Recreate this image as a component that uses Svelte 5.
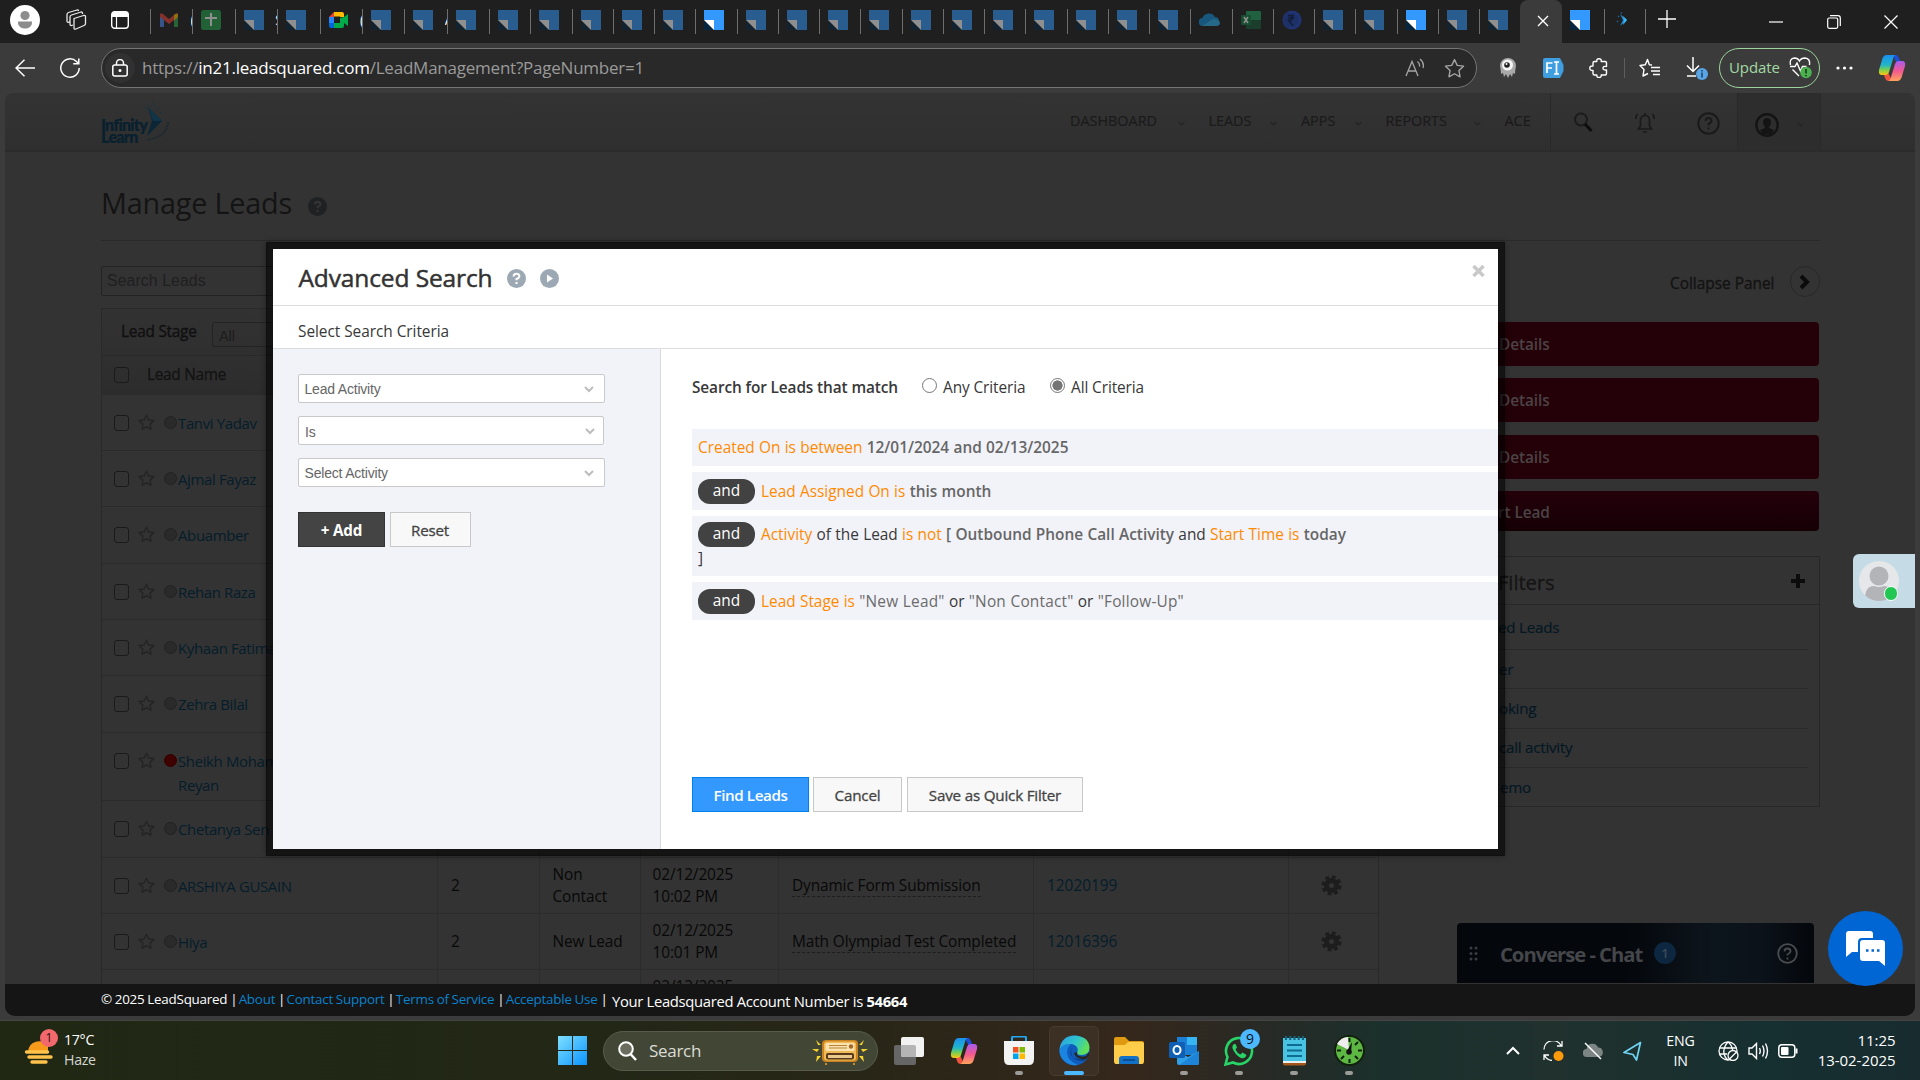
<script>
  const tabs = [
    { k: 'gmail', t: '(', w: 42.4 }, { k: 'sheets', w: 42.4 }, { k: 'ls', t: 'S', w: 42.4 }, { k: 'ls', w: 42.4 },
    { k: 'meet', t: '(', on: true, w: 42.4 }, { k: 'ls', w: 42.4 }, { k: 'ls', t: 'A', w: 42.4 }, { k: 'ls', w: 42.4 },
    ...Array.from({ length: 24 }, (_, i) => ({
      k: i === 17 ? 'cloud' : i === 18 ? 'excel' : i === 19 ? 'rupee' : 'ls',
      on: i === 5 || i === 22,
      w: 41.25
    })),
    { k: 'ls', w: 41 }
  ];

  const nav = [
    { t: 'DASHBOARD', w: 138.5, c: true }, { t: 'LEADS', w: 92.5, c: true },
    { t: 'APPS', w: 84.5, c: true }, { t: 'REPORTS', w: 119, c: true }, { t: 'ACE', w: 45 }
  ];

  const leads = [
    { n: 'Tanvi Yadav', h: 56 }, { n: 'Ajmal Fayaz', h: 56 }, { n: 'Abuamber', h: 57 }, { n: 'Rehan Raza', h: 56 },
    { n: 'Kyhaan Fatima', h: 56 }, { n: 'Zehra Bilal', h: 57 }, { n: 'Sheikh Moham', n2: 'Reyan', h: 68, hot: true },
    { n: 'Chetanya Sen', h: 56.5 },
    { n: 'ARSHIYA GUSAIN', h: 56, s: '2', st: 'Non Contact', d: '02/12/2025', m: '10:02 PM', a: 'Dynamic Form Submission', p: '12020199' },
    { n: 'Hiya', h: 56.5, s: '2', st: 'New Lead', d: '02/12/2025', m: '10:01 PM', a: 'Math Olympiad Test Completed', p: '12016396' },
    { n: '', h: 56, d: '02/12/2025', m: '\u00a0' }
  ];

  const filters = [
    { t: 'ed Leads', x: 97, h: 45 }, { t: 'er', x: 98, h: 39 }, { t: 'oking', x: 98, h: 39.5 },
    { t: 'call activity', x: 98, h: 39 }, { t: 'emo', x: 99, h: 40 }
  ];
</script>

{#snippet ls()}
  <svg width="20" height="20" viewBox="0 0 20 20"><path d="M0 0h20v20H10V10H0z" fill="#3399ff" /><path d="M0 10v10h10z" fill="#06263f" /><path d="M0 10h10v10z" fill="#fff" /></svg>
{/snippet}

{#snippet chev(size, color)}
  <svg width={size} height={size} viewBox="0 0 10 10" fill="none" stroke={color} stroke-width="2"><path d="M1 3l4 4 4-4" /></svg>
{/snippet}

{#snippet copilot(s)}
  <svg width={s} height={s} viewBox="0 0 28 28">
    <defs>
      <linearGradient id="cpa" x1="0" y1="0" x2="0" y2="1"><stop offset="0" stop-color="#1a8ff0" /><stop offset=".5" stop-color="#21b6c8" /><stop offset=".75" stop-color="#7fd04a" /><stop offset="1" stop-color="#ffc414" /></linearGradient>
      <linearGradient id="cpb" x1="0" y1="0" x2="0" y2="1"><stop offset="0" stop-color="#a85cf0" /><stop offset=".5" stop-color="#f2588f" /><stop offset="1" stop-color="#ffa45c" /></linearGradient>
    </defs>
    <path d="M18 1h-3l4 9h4L21 4q-1-3-3-3z" fill="#1c4fd6" />
    <path d="M10 27h4l-4-9H5l2 6q1 3 3 3z" fill="#ee5340" />
    <path d="M9 1h9q-2 0-3 4l-4 13q-1 3-4 3H4q-4 0-3-5L4 6q1-5 5-5z" fill="url(#cpa)" />
    <path d="M19 27h-9q2 0 3-4l4-13q1-3 4-3h3q4 0 3 5l-3 10q-1 5-5 5z" fill="url(#cpb)" />
  </svg>
{/snippet}

{#snippet star(s, color, sw)}
  <svg width={s} height={s} viewBox="0 0 20 20" fill="none" stroke={color} stroke-width={sw} stroke-linejoin="round"><path d="M10 1.500l2.600 5.500 6 .8-4.400 4.100 1.100 6L10 15l-5.300 2.900 1.100-6L1.400 7.800l6-.8z" /></svg>
{/snippet}

<div class="screen">
  <div class="tabstrip">
    <svg class="profile" width="30" height="30" viewBox="0 0 30 30"><circle cx="15" cy="15" r="15" fill="#fff" /><circle cx="15" cy="10.500" r="4.600" fill="#8c8c8c" /><path d="M8 16.500h14v1.500a7 5.500 0 0 1-14 0z" fill="#8c8c8c" /></svg>
    <svg class="work" width="22" height="22" viewBox="0 0 22 22" fill="none" stroke="#e8e8e8" stroke-width="1.300" stroke-linejoin="round"><path d="M9 9.500l9.500-3q2-.5 2 1v7q0 1.500-1.500 2l-8 3.500q-2 .7-2-1z" /><path d="M8 16l-1.500.5q-1.500.3-1.500-1.500V8q0-1.500 1.500-2L16 3q1.500-.4 1.500 1.500v.5" /><path d="M5 13l-1.500.3q-1.500.2-1.500-1.500V5.500Q2 4 3.500 3.500L12 1q1.500-.4 1.500 1" /></svg>
    <svg class="vtab" width="18" height="18" viewBox="0 0 18 18"><rect x=".7" y=".7" width="16.600" height="16.600" rx="3" fill="none" stroke="#fff" stroke-width="1.400" /><path d="M1 2.500Q1 1 3 1h12q2 0 2 2v3H1z" fill="#fff" /><path d="M5.500 6v11" stroke="#fff" stroke-width="1.200" /></svg>
    {#each tabs as tab}
      <div class="tab" style:width="{tab.w}px">
        <span class="fav" class:on={tab.on}>
          {#if tab.k === 'ls'}{@render ls()}
          {:else if tab.k === 'gmail'}<svg width="20" height="20" viewBox="0 0 20 20"><path d="M1 4v13h4V9z" fill="#4a8af4" /><path d="M19 4v13h-4V9z" fill="#34a853" /><path d="M1 5q0-3 3-1l6 5 6-5q3-2 3 1v2l-9 7-9-7z" fill="#ea4335" /><path d="M15 5q4-3 4 0v2l-4 3.500z" fill="#fbbc04" /></svg>
          {:else if tab.k === 'sheets'}<svg width="20" height="20" viewBox="0 0 20 20"><rect width="20" height="20" rx="2.500" fill="#23a34b" /><path d="M10 3v13M4 8h12" stroke="#fff" stroke-width="2" /></svg>
          {:else if tab.k === 'meet'}<svg width="20" height="20" viewBox="0 0 20 20"><path d="M5 2v5H0z" fill="#ea4335" /><path d="M5 2h8q2 0 2 2v3h-4V6.500H5z" fill="#ffba00" /><path d="M0 7h5v6.500H0z" fill="#2684fc" /><path d="M0 13h5v5H2q-2 0-2-2z" fill="#0066da" /><path d="M5 13h6V8l4-1 4-3v12l-4-3v3q0 2-2 2H5z" fill="#00ac47" /></svg>
          {:else if tab.k === 'cloud'}<svg width="21" height="20" viewBox="0 0 21 20"><path d="M4 16a4 4 0 0 1-.5-8A7 7 0 0 1 16 7a4.600 4.600 0 0 1 1 9z" fill="#1190dd" /><path d="M3 16l11-7q6 0 7 4 0 3-4 3z" fill="#2bb0ee" /></svg>
          {:else if tab.k === 'excel'}<svg width="20" height="20" viewBox="0 0 20 20"><rect x="5" y="1" width="15" height="18" rx="1" fill="#21a366" /><path d="M5 10h15v9H5z" fill="#185c37" /><rect y="5" width="10" height="10" rx="1" fill="#107c41" /><path d="M3 7l4 6M7 7l-4 6" stroke="#fff" stroke-width="1.500" /></svg>
          {:else}<svg width="20" height="20" viewBox="0 0 20 20"><circle cx="10" cy="10" r="9.500" fill="#2547c8" /><circle cx="9" cy="10" r="7.500" fill="#1d44b0" /><path d="M6 5.500h6M6 8h6M6.500 5.500q4.500 0 4 2.500-.5 2.500-4 2.500l4.500 5" stroke="#0a1a52" stroke-width="1.500" fill="none" /></svg>{/if}
        </span>
        {#if tab.t}<span class="sliver">{tab.t}</span>{/if}
      </div>
    {/each}
    <div class="activetab"><svg width="12" height="12" viewBox="0 0 12 12" stroke="#fff" stroke-width="1.400"><path d="M1 1l10 10M11 1L1 11" /></svg></div>
    <div class="tab last1"><span class="fav on">{@render ls()}</span></div>
    <div class="tab last2"><span class="fav on"><svg width="20" height="20" viewBox="0 0 20 20"><path d="M7 4l7 6-7 6 3-6z" fill="#2389c8" /><path d="M10 6l4 4-4 5 1-5z" fill="#35b5f5" /><path d="M5 6l1 1M8 2.500l1 1M4 11l1 1" stroke="#1c5f9a" stroke-width="1.500" /></svg></span></div>
    <div class="tab plus"><svg width="18" height="18" viewBox="0 0 18 18" stroke="#fff" stroke-width="1.300"><path d="M9 0v18M0 9h18" /></svg></div>
    <div class="winctl">
      <svg width="14" height="14" viewBox="0 0 14 14" stroke="#fff" stroke-width="1.200"><path d="M0 7h14" /></svg>
      <svg width="14" height="14" viewBox="0 0 14 14" fill="none" stroke="#fff" stroke-width="1.200"><rect x=".7" y="3" width="10" height="10.300" rx="1.500" /><path d="M3 .7h8q2.300 0 2.300 2.300v8" /></svg>
      <svg width="14" height="14" viewBox="0 0 14 14" stroke="#fff" stroke-width="1.200"><path d="M.5.5l13 13M13.500.5l-13 13" /></svg>
    </div>
  </div>

  <div class="toolbar">
    <svg class="back" width="21" height="18" viewBox="0 0 21 18" fill="none" stroke="#fff" stroke-width="1.500"><path d="M20 9H1M9.500.8L1 9l8.500 8.200" /></svg>
    <svg class="reload" width="20" height="20" viewBox="0 0 20 20" fill="none" stroke="#fff" stroke-width="1.500"><path d="M19.200 10A9.200 9.200 0 1 1 16.500 3.500L18.500 5.500M18.800.5v5.300h-5.600" /></svg>
    <div class="address">
      <div class="lockwrap"><svg width="16" height="18" viewBox="0 0 16 18" fill="none" stroke="#fff" stroke-width="1.500"><rect x=".8" y="6" width="14.400" height="11" rx="2" /><path d="M4.500 6V4a3.500 3.500 0 0 1 7 0v2" /><circle cx="8" cy="11.500" r=".8" fill="#fff" /></svg></div>
      <div class="url">https://<b>in21.leadsquared.com</b>/LeadManagement?PageNumber=1</div>
      <svg class="read" width="20" height="20" viewBox="0 0 20 20" fill="none" stroke="#a5a5a5" stroke-width="1.300"><path d="M1 18L7 3.500 13 18M3.300 13h7.500M12.500 3.500q2.500 2 2 5M15 1q4.500 3.500 3 9" /></svg>
      {@render star(21, '#a5a5a5', 1.3)}
    </div>
    <svg class="octo" width="18" height="20" viewBox="0 0 18 20"><path d="M1 8a8 8 0 0 1 16 0q-1 4-1 8l-2-1-1 4-2-3-2 4-2-4-2 3-1-4-2 1q0-4-1-8z" fill="#a9a9a9" /><circle cx="8.500" cy="7" r="5.500" fill="#f5f5f5" /><circle cx="8" cy="7" r="2.800" fill="#222" /><circle cx="7.500" cy="6" r="1" fill="#fff" /></svg>
    <svg class="fi" width="21" height="20" viewBox="0 0 21 20"><path d="M2 0h15l3.500 7v6L17 20H2q-2 0-2-2V2q0-2 2-2z" fill="#3f9ee0" /><path d="M4 15V5h5.500M4 10h5M11 4h5M11 16h5M13.500 4v12" stroke="#fff" stroke-width="1.700" fill="none" /></svg>
    <svg class="puzzle" width="20" height="20" viewBox="0 0 20 20" fill="none" stroke="#fff" stroke-width="1.400" stroke-linejoin="round"><path d="M5.500 3.500h2.300q-.5-2.800 2.200-2.800t2.200 2.800h4q1.300 0 1.300 1.300v3.700q-3.500-.5-3.500 1.700t3.500 1.800v3.500q0 1.500-1.300 1.500h-4q.3 2.500-2.200 2.500T7.800 17H5.500Q4 17 4 15.500v-3Q.8 12.700.8 10.200T4 8V5q0-1.500 1.500-1.500z" /></svg>
    <i class="tsep"></i>
    <svg class="favs" width="21" height="20" viewBox="0 0 21 20" fill="none" stroke="#fff" stroke-width="1.400" stroke-linejoin="round"><path d="M13 7l-2.700-.3L8.500 1.500 6.300 6.700 1 7.500l4 4L4 18l5-2.500M12 9.500h9M12 13h9M14 16.500h7" /></svg>
    <svg class="dl" width="22" height="24" viewBox="0 0 22 24" fill="none" stroke="#fff" stroke-width="1.500"><path d="M7 1v14M1 9.500l6 6 6-6M1 20h9" /><circle cx="16" cy="18" r="6" fill="#59a5e6" stroke="none" /><path d="M16 16.500v5M16 14v1.500" stroke="#1d3a55" stroke-width="1.400" /></svg>
    <div class="update"><span>Update</span>
      <svg width="24" height="22" viewBox="0 0 24 22" fill="none" stroke="#fff" stroke-width="1.400"><path d="M1.500 8Q0 1.500 5.500 1 9 1 10.500 4 12 1 16 1q5.500.5 4.500 7M1 9.500h5l2-3.500 3.500 8 2-4.500h4M3.500 12.500l6.500 6.500" /><circle cx="17" cy="15.500" r="5.800" fill="#4caf50" stroke="none" /><path d="M17 12v4.500M17 18v1.300" stroke="#153b15" stroke-width="1.600" /></svg></div>
    <svg class="dots" width="17" height="4" viewBox="0 0 17 4" fill="#fff"><circle cx="2" cy="2" r="1.600" /><circle cx="8.500" cy="2" r="1.600" /><circle cx="15" cy="2" r="1.600" /></svg>
    {@render copilot(28)}
  </div>

  <div class="page">
    <div class="phead">
      <div class="logo">
        <div class="lt">Infinity<br />Learn</div>
        <svg width="28" height="42" viewBox="0 0 28 42"><path d="M6 5l14 14L5 34l5-15z" fill="#0a2637" /><path d="M6 5l5 14h9z" fill="#103548" /><path d="M5 2h1M9 4h1M3 6h1M12 3h1M15 7h1M10 1h1M18 11h1" stroke="#143349" stroke-width="1.500" /><path d="M26 20q-1 15-21 18" fill="none" stroke="#1b2930" stroke-width="2" stroke-dasharray="2 1" /></svg>
      </div>
      <div class="nav">
        {#each nav as n}
          <div class="navi" style:width="{n.w}px"><span>{n.t}</span>{#if n.c}<em>{@render chev(7, '#252525')}</em>{/if}</div>
        {/each}
      </div>
      <div class="tools">
        <svg width="20" height="20" viewBox="0 0 20 20" fill="none"><circle cx="8" cy="7.500" r="6" stroke="#1c1c1c" stroke-width="2" /><path d="M12 12l6.500 7" stroke="#0d0d0d" stroke-width="3" /></svg>
        <svg width="20" height="22" viewBox="0 0 20 22" fill="none" stroke="#1a1a1a" stroke-width="1.700"><path d="M3.500 17h13l-2-3V8a4.500 4.500 0 0 0-9 0v6zM10 1v2M8 20h4M2.500 2Q.8 4 .8 7M17.500 2q1.700 2 1.700 5" /></svg>
        <svg width="23" height="23" viewBox="0 0 23 23" fill="none" stroke="#1a1a1a" stroke-width="2"><circle cx="11.500" cy="11.500" r="10.200" /><path d="M8.500 9q0-3 3-3t3 2.800q0 1.700-3 3.200v1.500M11.500 15.500v2" /></svg>
      </div>
      <div class="user">
        <svg width="24" height="24" viewBox="0 0 24 24"><circle cx="12" cy="12" r="10.700" fill="none" stroke="#141414" stroke-width="2.400" /><path d="M12 5a4 4 0 0 1 4 4q0 3-2 5 0 1.500 5 3l-3 4H8l-3-4q5-1.500 5-3-2-2-2-5a4 4 0 0 1 4-4z" fill="#141414" /></svg>
        {@render chev(7, '#262626')}
      </div>
    </div>

    <div class="content">
      <div class="title"><h1>Manage Leads</h1>
        <svg width="19" height="19" viewBox="0 0 19 19"><circle cx="9.500" cy="9.500" r="9.500" fill="#1f2122" /><path d="M6.800 7.500q0-2.800 2.800-2.800t2.800 2.500q0 1.500-2.800 2.800v1.300M9.600 13v2" fill="none" stroke="#363636" stroke-width="2" /></svg>
      </div>
      <div class="cols">
        <div class="left">
          <div class="search">Search Leads</div>
          <div class="table">
            <div class="stage"><span>Lead Stage</span><div>All</div></div>
            <div class="thead"><i class="cb"></i><span>Lead Name</span></div>
            {#each leads as l}
              <div class="row" style:height="{l.h}px">
                <div class="name">
                  {#if l.n}<i class="cb"></i><span class="st">{@render star(17, '#252525', 1.8)}</span><i class="dot" class:hot={l.hot}></i>
                    <span class="nm">{l.n}{#if l.n2}<br />{l.n2}{/if}</span>{/if}
                </div>
                <div class="c">{l.s ?? ''}</div>
                <div class="c">{l.st ?? ''}</div>
                <div class="c date">{#if l.d}{l.d}<br />{l.m}{/if}</div>
                <div class="c">{#if l.a}<u>{l.a}</u>{/if}</div>
                <div class="c link">{l.p ?? ''}</div>
                <div class="c gear">{#if l.p}<svg width="21" height="21" viewBox="0 0 21 21"><circle cx="10.500" cy="10.500" r="5" fill="none" stroke="#1d1d1d" stroke-width="5" /><circle cx="10.500" cy="10.500" r="8.600" fill="none" stroke="#1d1d1d" stroke-width="3" stroke-dasharray="3.900 2.854" /></svg>{/if}</div>
              </div>
            {/each}
          </div>
        </div>
        <div class="right">
          <div class="collapse"><span>Collapse Panel</span><div><svg width="12" height="16" viewBox="0 0 12 16" fill="none" stroke="#0b0b0b" stroke-width="4"><path d="M2 2l6 6-6 6" /></svg></div></div>
          <div class="red">Details</div>
          <div class="red">Details</div>
          <div class="red third">Details</div>
          <div class="red dark">rt Lead</div>
          <div class="filters">
            <div class="fh"><span>Filters</span><svg width="14" height="14" viewBox="0 0 14 14" stroke="#0c0c0c" stroke-width="4"><path d="M7 0v14M0 7h14" /></svg></div>
            {#each filters as f}
              <div class="fl" style:height="{f.h}px" style:padding-left="{f.x}px">{f.t}</div>
            {/each}
          </div>
        </div>
      </div>
    </div>

    <div class="footer">
      <span class="f1">© 2025 LeadSquared | <a>About</a> | <a>Contact Support</a> | <a>Terms of Service</a> | <a>Acceptable Use</a> |</span>
      <span class="f2">Your Leadsquared Account Number is <b>54664</b></span>
    </div>

    <div class="converse">
      <svg width="9" height="15" viewBox="0 0 9 15" fill="#3a3d41"><circle cx="2" cy="2" r="1.500" /><circle cx="7" cy="2" r="1.500" /><circle cx="2" cy="7.500" r="1.500" /><circle cx="7" cy="7.500" r="1.500" /><circle cx="2" cy="13" r="1.500" /><circle cx="7" cy="13" r="1.500" /></svg>
      <strong>Converse - Chat</strong><span class="cn">1</span>
      <svg class="ch" width="21" height="21" viewBox="0 0 21 21" fill="none" stroke="#4a4c4e" stroke-width="1.800"><circle cx="10.500" cy="10.500" r="9.300" /><path d="M7.500 8.500q0-3 3-3t3 2.700q0 1.600-3 3.300v1M10.500 14.500v2" /></svg>
    </div>
    <div class="presence">
      <svg width="40" height="40" viewBox="0 0 40 40"><defs><clipPath id="pc"><circle cx="20" cy="20" r="20" /></clipPath></defs><circle cx="20" cy="20" r="20" fill="#e6e7e9" /><g clip-path="url(#pc)"><circle cx="20" cy="15" r="9.500" fill="#b3b4b8" /><path d="M6 38q0-13 9-13 5 2 10 0 9 0 9 13v4H6z" fill="#b3b4b8" /></g></svg>
      <i></i>
    </div>
    <div class="fab"><svg width="40" height="36" viewBox="0 0 40 36"><path d="M3 0h21q3 0 3 3v4H16q-4 0-4 4v10H6l-6 5V3q0-3 3-3z" fill="#fff" /><path d="M17 9h19q3 0 3 3v23l-6-5H17q-3 0-3-3V12q0-3 3-3z" fill="#fff" /><path d="M20 19.500h2.500M25.500 19.500h2.500M31 19.500h2.500" stroke="#0066d3" stroke-width="2.500" /></svg></div>
  </div>

  <div class="strip"></div>

  <div class="taskbar">
    <div class="weather">
      <div class="wi"><svg width="30" height="30" viewBox="0 0 30 30"><path d="M4 16a11 11 0 0 1 20-6v7H4z" fill="#f79a1c" /><path d="M2.500 16h21M5 21h22M8 26h14" stroke="#ffc24a" stroke-width="3.400" stroke-linecap="round" /></svg><b>1</b></div>
      <div class="wt">17°C<br /><span>Haze</span></div>
    </div>
    <svg class="start" width="29" height="29" viewBox="0 0 29 29"><defs><linearGradient id="wn" x1="0" y1="0" x2="1" y2="1"><stop offset="0" stop-color="#7fe0ff" /><stop offset="1" stop-color="#0a93ff" /></linearGradient></defs><path d="M0 0h14v14H0zM15 0h14v14H15zM0 15h14v14H0zM15 15h14v14H15z" fill="url(#wn)" /></svg>
    <div class="tsearch">
      <svg width="19" height="20" viewBox="0 0 19 20" fill="none" stroke="#fff" stroke-width="2"><circle cx="8" cy="8" r="6.800" fill="#6b6e5e" /><path d="M12.500 13l5.500 6" stroke-width="2.500" /></svg>
      <span>Search</span>
      <svg width="56" height="28" viewBox="0 0 56 28"><rect x="10" y="3" width="36" height="22" rx="4" fill="#c98222" /><rect x="12" y="4.500" width="32" height="19" rx="3" fill="#f0bb57" /><rect x="13.500" y="6" width="29" height="8" rx="1.500" fill="#fbe3b0" /><rect x="14" y="16" width="28" height="6.500" rx="2" fill="#5a3a1c" /><rect x="16" y="18" width="24" height="3" fill="#e9c98c" /><path d="M17 8.500h18M17 11h18" stroke="#b98539" stroke-width="1" /><circle cx="39" cy="9.500" r="2.200" fill="#a0682c" /><path d="M14 26v2M42 26v2" stroke="#c98a2b" stroke-width="2" /><path d="M4 3l5 5-3 0zM0 12l7 0-2 3zM4 25l5-6-4 0zM52 3l-5 5 3 0zM56 12h-7l2 3zM52 25l-5-6h4z" fill="#f7d32e" /></svg>
    </div>
    <svg class="i tv" width="30" height="28" viewBox="0 0 30 28"><rect y="8" width="22" height="20" rx="2" fill="#666" /><rect x="7" width="23" height="20" rx="2" fill="#f2f2f2" /><path d="M7 8h13q2 0 2 2v10H9q-2 0-2-2z" fill="#b5b5b5" /></svg>
    <div class="i cp">{@render copilot(28)}</div>
    <div class="i app store"><svg width="30" height="29" viewBox="0 0 30 29"><path d="M8 6V2q0-1.500 1.500-1.500h11Q22 .5 22 2v4" fill="none" stroke="#22a7f2" stroke-width="2" /><path d="M0 5h30v18q0 6-5 6H5q-5 0-5-6z" fill="#f3f3f3" /><path d="M9 11h5.500v5.500H9z" fill="#f25022" /><path d="M15.500 11H21v5.500h-5.500z" fill="#7fba00" /><path d="M9 17.500h5.500V23H9z" fill="#00a4ef" /><path d="M15.500 17.500H21V23h-5.500z" fill="#ffb900" /></svg></div>
    <div class="i app edge"><svg width="31" height="31" viewBox="0 0 31 31"><defs><linearGradient id="ed" x1="0" y1="0" x2="1" y2=".4"><stop offset="0" stop-color="#2b9de8" /><stop offset=".6" stop-color="#2fc6c9" /><stop offset="1" stop-color="#5fe05a" /></linearGradient></defs><circle cx="15.500" cy="15.500" r="15" fill="#0f5cbd" /><path d="M.5 15Q2 .5 16 .5q14 1 14.500 12 0 7-7.500 7.500-6 0-4.500-3.500Q20 11 13 9 4 8 .5 15z" fill="url(#ed)" /><path d="M.5 15Q5 8 12 9q-4 3-4 9 1 9 11 11.500-6 2-12-2Q0 22 .5 15z" fill="#1b86e0" /><path d="M14 12q-4 3-2 8 4 6 14 3l2-1-1 2-3 2Q12 26 12 15z" fill="#0b3f86" /><path d="M18 17q-1 6 9 4l3-4v4l-3 3q-10 1-12-6z" fill="#2a241e" /></svg></div>
    <svg class="i fe" width="30" height="28" viewBox="0 0 30 28"><path d="M0 2q0-2 2-2h9l4 4h13q2 0 2 2v6H0z" fill="#e09a12" /><path d="M0 9q0-1 1-1h10l3-3h14q2 0 2 2v17q0 3-2 3H2q-2 0-2-3z" fill="#ffcd4a" /><path d="M5 22q0-3 3-3h14q3 0 3 3v5H5z" fill="#1172c8" /><path d="M9 23h12" stroke="#0b4f96" stroke-width="2" /></svg>
    <div class="i app ol"><svg width="30" height="28" viewBox="0 0 30 28"><path d="M8 0h20v18H8z" fill="#1b7fd6" /><path d="M18 0h10v8H18z" fill="#37b4f2" /><path d="M8 14l11 6 11-6v12q0 2-2 2H10q-2 0-2-2z" fill="#2fa0e8" /><path d="M30 14L10 28h18q2 0 2-2z" fill="#1d84d8" /><rect y="5" width="16" height="16" rx="1.500" fill="#0f5fb5" /><ellipse cx="8" cy="13" rx="3.500" ry="4" fill="none" stroke="#fff" stroke-width="2" /></svg></div>
    <div class="i app wa"><svg width="31" height="30" viewBox="0 0 31 30" fill="none"><path d="M1.500 28.500l2-7.500A13 13 0 1 1 9 26.500z" stroke="#28d467" stroke-width="2.600" /><path d="M10 8q-3 2-.5 6.500 3 5.500 7.500 7.500 4 1 5.500-3l-4-2.500-2 2q-3.500-1.500-5-5l1.500-2L11.500 8z" fill="#28d467" /></svg><b>9</b></div>
    <div class="i app np"><svg width="23" height="30" viewBox="0 0 23 30"><path d="M0 2h23v25H0z" fill="#48c3e2" /><path d="M0 26h23v1.500q0 2-2 2H2q-2 0-2-2z" fill="#a4561f" /><path d="M0 25h23v2H0z" fill="#e9eef0" /><path d="M4 9h15M4 14.500h15M4 20h15" stroke="#0d6d90" stroke-width="2" /><path d="M3 0v4M7.200 0v4M11.500 0v4M15.700 0v4M20 0v4" stroke="#16617c" stroke-width="2" /></svg></div>
    <div class="i app ck"><svg width="31" height="31" viewBox="0 0 31 31"><circle cx="15.500" cy="15.500" r="14.500" fill="#5db843" stroke="#12210d" stroke-width="2" /><path d="M15 15L3 9Q7 2 14 2z" fill="#eee" /><path d="M15.500 3v4M15.500 24v4M3 15.500h4M24 15.500h4M24 7l-3 3M7 24l3-3M24 24l-3-3" stroke="#12210d" stroke-width="2" /><path d="M18 7l-1 10a2 2 0 0 1-4-1z" fill="#111" /><circle cx="15" cy="17" r="2.800" fill="#111" /></svg></div>
    <div class="tray">
      <svg class="t1" width="14" height="9" viewBox="0 0 14 9" fill="none" stroke="#fff" stroke-width="2"><path d="M1 8l6-6 6 6" /></svg>
      <svg class="t2" width="21" height="20" viewBox="0 0 21 20" fill="none" stroke="#fff" stroke-width="1.300"><path d="M1 8.500A9 9 0 0 1 18 4.500M19 0v5h-5M1 19v-5h5M1.500 14.500Q4 19 9 19.500" /><circle cx="15.500" cy="15" r="5" fill="#ff9a0d" stroke="none" /></svg>
      <svg class="t3" width="20" height="18" viewBox="0 0 20 18"><path d="M4 15a4 4 0 0 1-.5-8A6 6 0 0 1 15 5.500 4.800 4.800 0 0 1 16 15z" fill="#7c8583" /><path d="M2 1l16 16" stroke="#fff" stroke-width="1.400" /></svg>
      <svg class="t4" width="19" height="20" viewBox="0 0 19 20" fill="none" stroke="#6fd3f2" stroke-width="1.700" stroke-linejoin="round"><path d="M17.500 1.500L1 11.500l9 2 3.500 5.500z" /></svg>
      <div class="lang">ENG<br />IN</div>
      <svg class="t5" width="21" height="20" viewBox="0 0 21 20" fill="none" stroke="#fff" stroke-width="1.300"><circle cx="10" cy="10" r="9" /><path d="M1.500 7h17M1.500 13H9M10 1Q5 6 6 13q1 4 4 6M10 1q4 3 4.500 8" /><circle cx="15" cy="14.500" r="5" fill="#182e2e" /><path d="M11.500 18l7-7" /></svg>
      <svg class="t6" width="21" height="18" viewBox="0 0 21 18" fill="none" stroke="#fff" stroke-width="1.400"><path d="M1 6h3l4.500-4.500v15L4 12H1zM11.500 6q1.500 3 0 6M14.500 3.500q3 5.500 0 11M17.500 1.500q4 7.500 0 15" /></svg>
      <svg class="t7" width="20" height="14" viewBox="0 0 20 14"><rect x=".8" y=".8" width="16" height="12.400" rx="3" fill="none" stroke="#fff" stroke-width="1.500" /><rect x="3" y="3" width="7.500" height="8" rx="1" fill="#fff" /><path d="M18.500 4.500v5" stroke="#fff" stroke-width="2" /></svg>
      <div class="time">11:25<br />13-02-2025</div>
    </div>
  </div>

  <div class="modal">
    <div class="mh"><h2>Advanced Search</h2>
      <svg class="q" width="19" height="19" viewBox="0 0 19 19"><circle cx="9.500" cy="9.500" r="9.500" fill="#9ca8b3" /><path d="M6.600 7.500q0-2.800 2.900-2.800t2.900 2.500q0 1.500-2.900 2.800v1.300M9.500 13v2" fill="none" stroke="#fff" stroke-width="2" /></svg>
      <svg width="19" height="19" viewBox="0 0 19 19"><circle cx="9.500" cy="9.500" r="9.500" fill="#9ca8b3" /><path d="M7 5.500v8l6-4z" fill="#fff" /></svg>
      <svg class="x" width="13" height="12" viewBox="0 0 13 12" stroke="#c9c9c9" stroke-width="3.500"><path d="M1.500 1l10 10M11.500 1l-10 10" /></svg>
    </div>
    <div class="ms">Select Search Criteria</div>
    <div class="mb">
      <div class="ml">
        <div class="sel"><span>Lead Activity</span>{@render chev(10, '#bdbdbd')}</div>
        <div class="sel s2"><span>Is</span>{@render chev(10, '#bdbdbd')}</div>
        <div class="sel"><span>Select Activity</span>{@render chev(10, '#bdbdbd')}</div>
        <div class="btns"><button class="add">+ Add</button><button class="reset">Reset</button></div>
      </div>
      <div class="mr">
        <div class="match"><b>Search for Leads that match</b><i></i><span class="any">Any Criteria</span><i class="sel1"></i><span>All Criteria</span></div>
        <div class="crit"><em>Created On is between</em> <b>12/01/2024 and 02/13/2025</b></div>
        <div class="crit c2"><span class="and">and</span><em>Lead Assigned On is</em> <b>this month</b></div>
        <div class="crit c3"><span class="and">and</span><em>Activity</em> of the Lead <em>is not</em> <b>[ Outbound Phone Call Activity</b> and <em>Start Time is</em> <b>today</b><br />]</div>
        <div class="crit c2 c4"><span class="and">and</span><em>Lead Stage is</em> <s>"New Lead"</s> or <s>"Non Contact"</s> or <s>"Follow-Up"</s></div>
        <div class="acts"><button class="find">Find Leads</button><button class="cancel">Cancel</button><button class="save">Save as Quick Filter</button></div>
      </div>
    </div>
  </div>
</div>

<style>
  :global(body) { margin: 0; background: #1f1f1f; }
  .screen { width: 1920px; height: 1080px; overflow: hidden; position: relative; display: flex; flex-direction: column; background: #3b3b3b; font-family: "Open Sans", "Noto Sans", sans-serif; font-size: 15.4px; letter-spacing: -0.1px; color: #fff; }
  .screen :global(*) { box-sizing: border-box; }
  svg { display: block; flex: none; }
  .tabstrip { height: 43px; flex: none; background: #1f1f1f; display: flex; align-items: flex-start; }
  .profile { margin: 5px 0 0 10px; }
  .work { margin: 9px 0 0 25px; }
  .vtab { margin: 11px 0 0 24px; }
  .vtab + .tab { margin-left: 21px; }
  .tab { flex: none; height: 25px; margin-top: 9px; border-left: 1px solid #6e6e6e; padding: 1px 0 0 8px; display: flex; overflow: hidden; }
  .fav { width: 20px; flex: none; opacity: .5; }
  .fav.on { opacity: 1; }
  .sliver { margin-left: 11.500px; width: 2px; overflow: hidden; font-size: 14px; line-height: 20px; }
  .activetab { width: 42px; height: 43px; flex: none; background: #3b3b3b; border-radius: 8px 8px 0 0; display: flex; justify-content: center; padding: 15px 0 0 4px; }
  .last1 { width: 42px; border-color: transparent; padding-left: 7px; }
  .last2 { width: 41px; padding-left: 8px; }
  .plus { padding: 1px 0 0 12px; width: 90px; }
  .winctl { display: flex; gap: 43.500px; margin: 15px 0 0 34px; }
  .toolbar { height: 50px; flex: none; display: flex; align-items: center; }
  .back { margin-left: 15px; }
  .reload { margin-left: 24px; }
  .address { margin-left: 21px; width: 1376px; height: 40px; border: 1px solid #757575; border-radius: 20px; background: #292929; display: flex; align-items: center; flex: none; }
  .lockwrap { width: 30px; height: 30px; margin-left: 3px; border-radius: 15px; background: #313131; display: flex; align-items: center; justify-content: center; }
  .url { margin-left: 7px; width: 1262.500px; color: #9a9a9a; font-size: 17px; letter-spacing: -.23px; white-space: nowrap; padding-bottom: 2px; }
  .url b { font-weight: 400; color: #fff; }
  .address .read { margin-right: 19px; }
  .octo { margin-left: 22px; }
  .fi { margin-left: 25.500px; }
  .puzzle { margin-left: 25.500px; }
  .tsep { width: 1px; height: 20px; background: #5e5e5e; margin-left: 15px; }
  .favs { margin-left: 14px; }
  .dl { margin-left: 26px; }
  .update { margin: 0 16px 0 11px; width: 101px; height: 40px; border: 1.500px solid #9cd49c; border-radius: 20px; display: flex; align-items: center; padding-left: 9px; color: #a3d9a3; font-size: 15px; }
  .update span { width: 60px; padding-bottom: 2px; }
  .dots { margin-right: 25px; }
  .page { position: relative; margin: 0 5px; height: 923px; flex: none; background: #333; border-radius: 8px 8px 10px 10px; overflow: hidden; }
  .phead { height: 59px; background: linear-gradient(#333, #2f2f2f); border-bottom: 2px solid #2b2b2b; display: flex; padding-left: 96px; }
  .logo { width: 969px; display: flex; padding-top: 9px; }
  .lt { font: 800 16px/12px Lato, sans-serif; letter-spacing: -.75px; color: #09202e; padding-top: 17px; width: 41px; white-space: nowrap; }
  .nav { display: flex; color: #1b1b1b; font-size: 14.400px; padding-top: 18px; letter-spacing: 0; -webkit-text-stroke: .2px; }
  .navi { line-height: 20px; position: relative; }
  .navi em { position: absolute; right: 24px; top: 9px; }
  .tools { display: flex; gap: 42px; padding: 19px 17px 0 22px; border-left: 1px solid #292929; height: 57px; }
  .user { width: 84px; border: solid #292929; border-width: 0 1px; background: #2d2d2d; display: flex; align-items: center; padding: 5px 0 0 17px; gap: 18px; height: 58px; }
  .content { height: 832px; overflow: hidden; padding-left: 96px; }
  .title { height: 89px; width: 1719px; border-bottom: 1px solid #292929; display: flex; }
  h1 { margin: 31px 17px 0 0; font-weight: 400; font-size: 28.800px; line-height: 40px; color: #141414; letter-spacing: -.2px; width: 190px; white-space: nowrap; }
  .title svg { margin-top: 45px; }
  .cols { display: flex; }
  .left { width: 1278px; padding-top: 25px; flex: none; }
  .search { width: 300px; height: 30px; border: 1px solid #232323; border-radius: 2px; color: #1f1f1f; font: 15.800px/28px "Liberation Sans", sans-serif; padding-left: 5px; letter-spacing: .1px; }
  .table { margin-top: 12px; border: 1px solid #292929; }
  .stage { height: 46px; display: flex; padding: 13px 0 0 19px; background: linear-gradient(#323232, #2f2f2f); }
  .stage span { -webkit-text-stroke: .3px; width: 91px; color: #0f0f0f; line-height: 20px; letter-spacing: -.25px; }
  .stage div { width: 160px; height: 25px; border: 1px solid #232323; color: #1c1c1c; font: 14.500px/26px "Liberation Sans", sans-serif; padding-left: 6px; border-radius: 2px; }
  .thead { height: 39px; border-top: 1px solid #292929; background: linear-gradient(#303030, #2c2c2c); display: flex; align-items: center; padding-left: 12px; color: #131313; -webkit-text-stroke: .3px; letter-spacing: -.3px; }
  .thead .cb { margin-right: 18px; }
  .thead span { padding-bottom: 2px; }
  .cb { width: 15px; height: 16px; border: 1.500px solid #1a1a1a; border-radius: 3px; flex: none; }
  .row { display: grid; grid-template-columns: 335px 101.500px 101px 138.500px 255px 255px 89px; border-top: 1px solid #2b2b2b; color: #080808; line-height: 22.500px; }
  .name { display: flex; padding: 20px 0 0 12px; }
  .name .st { margin: -1px 9px 0 9px; }
  .dot { width: 13px; height: 13px; border-radius: 7px; background: #2a2a2a; flex: none; margin-top: 1px; border: 1px solid #222; }
  .dot.hot { background: #3f0000; border-color: #330000; }
  .nm { margin: -4px 0 0 1px; color: #051d2b; white-space: nowrap; line-height: 24px; font-size: 15px; letter-spacing: -.38px; }
  .c { border-left: 1px solid #2c2c2c; padding: 2px 14px 0 13px; display: flex; align-items: center; white-space: nowrap; }
  .c:nth-child(3) { white-space: normal; padding-right: 10px; }
  .c.date { padding-left: 12px; }
  .c u { text-decoration: none; border-bottom: 1px dashed #1d1d1d; line-height: 21px; }
  .link { color: #051d2b; letter-spacing: 0; }
  .c.gear { padding: 0 0 0 32px; }
  .right { width: 420px; margin-left: 21px; padding-top: 25px; }
  .collapse { display: flex; height: 56px; color: #121212; padding-left: 270px; -webkit-text-stroke: .3px; letter-spacing: 0; }
  .collapse span { width: 120px; line-height: 36px; }
  .collapse div { width: 30px; height: 31px; border: 1px solid #282828; border-radius: 16px; display: flex; align-items: center; justify-content: center; }
  .red { height: 44px; margin: 0 1px 12px 0; border-radius: 4px; background: #240008; color: #4b4345; font-weight: 600; padding: 2px 0 0 99px; line-height: 42px; font-size: 15.400px; }
  .red.third { margin-top: 13px; }
  .red.dark { height: 40px; line-height: 39px; background: linear-gradient(#24000a, #150005); margin-bottom: 25px; padding-left: 98px; }
  .filters { border: 1px solid #272727; height: 251px; }
  .fh { height: 48px; border-bottom: 1px solid #292929; display: flex; align-items: center; justify-content: space-between; padding: 0 14px 0 97px; font-size: 20.300px; color: #151515; -webkit-text-stroke: .3px; }
  .fh span { padding-top: 2px; }
  .fl { margin-right: 11px; border-bottom: 1px solid #292929; color: #041824; display: flex; align-items: center; white-space: nowrap; padding-bottom: 1px; letter-spacing: -.25px; font-size: 15.200px; -webkit-text-stroke: .2px; }
  .fl:last-child { border-color: transparent; }
  .footer { height: 32px; background: #151515; padding-left: 96px; display: flex; white-space: nowrap; }
  .f1 { font-size: 13.400px; line-height: 30px; width: 511px; flex: none; letter-spacing: -.23px; word-spacing: -.4px; }
  .f1 a { color: #0a82cc; margin-left: -1.500px; }
  .f2 { font-size: 14.800px; line-height: 35px; letter-spacing: -.32px; }
  .converse { position: absolute; left: 1452px; top: 830px; width: 357px; height: 60px; border-radius: 4px 4px 0 0; background: linear-gradient(90deg, #04070c 47%, #0d151c 72%, #0b1219 85%, #04070c); display: flex; align-items: center; padding-left: 12px; }
  .converse strong { margin-left: 22px; padding-top: 2px; width: 154px; font-size: 20.300px; letter-spacing: -1.050px; color: #44464a; white-space: nowrap; }
  .cn { width: 22px; height: 22px; border-radius: 11px; background: #0d2740; color: #3c4a57; font-size: 13px; line-height: 22px; text-align: center; font-weight: 600; }
  .ch { margin-left: 101px; }
  .presence { position: absolute; right: 0; top: 461px; width: 62px; height: 54px; background: #c5dbe6; border-radius: 6px 0 0 6px; padding: 7px 6px; }
  .presence i { position: absolute; left: 31px; top: 32px; width: 14px; height: 15px; border-radius: 8px; background: #22c653; border: 1px solid #fff; }
  .fab { position: absolute; left: 1823px; top: 818px; width: 75px; height: 75px; border-radius: 38px; background: #0066d3; display: flex; align-items: center; justify-content: center; }
  .strip { height: 5px; flex: none; background: linear-gradient(#3b3b3b 80%, #4b4e47); }
  .taskbar { height: 59px; flex: none; display: flex; align-items: center; background: linear-gradient(90deg, #202814 0, #222716 30%, #282617 45%, #35271b 59%, #272a26 66%, #1b302c 72%, #20312e 81%, #162f30 92%, #182c30); }
  .weather { display: flex; width: 558px; padding-left: 24px; align-items: center; flex: none; }
  .wi { position: relative; width: 40px; }
  .wi b { position: absolute; left: 16px; top: -7px; width: 18px; height: 18px; border-radius: 9px; background: #f2686c; color: #2a1111; font-size: 12px; line-height: 18px; text-align: center; font-weight: 400; }
  .wt { font-size: 14.200px; line-height: 20px; letter-spacing: -.3px; margin-top: -2px; }
  .wt span { color: #d4d6d0; }
  .tsearch { margin-left: 16px; width: 275px; height: 40px; border-radius: 20px; background: #424735; border: 1px solid #565b4b; display: flex; align-items: center; padding-left: 14px; color: #dcdcd6; font-size: 17px; flex: none; }
  .tsearch span { margin-left: 12px; width: 163px; letter-spacing: -.3px; }
  .i { flex: none; }
  .tv { margin-left: 16px; }
  .cp { margin-left: 26px; width: 28px; }
  .app { position: relative; height: 50px; display: flex; align-items: center; justify-content: center; width: 50px; }
  .app::after { content: ""; position: absolute; left: 21px; bottom: 1px; width: 8px; height: 4px; border-radius: 2px; background: #9b9b98; }
  .store { margin-left: 16px; }
  .edge { margin-left: 5px; background: #3c3025; border: 1px solid #463a2f; border-radius: 5px; }
  .edge::after { left: 14px; width: 20px; bottom: 0; background: #4cb8ff; }
  .fe { margin-left: 14.500px; }
  .ol { margin-left: 15px; }
  .wa { margin-left: 5.500px; }
  .wa b { position: absolute; right: 4px; top: 3px; width: 20px; height: 20px; border-radius: 10px; background: #4cb8ff; color: #111; font-weight: 400; font-size: 14px; line-height: 20px; text-align: center; }
  .np, .ck { margin-left: 5px; }
  .tray { display: flex; align-items: center; margin-left: 131.500px; font-size: 14.200px; line-height: 20px; letter-spacing: -.2px; width: 390px; flex: none; }
  .t2 { margin-left: 23px; }
  .t3 { margin-left: 19px; }
  .t4 { margin-left: 20px; }
  .lang { width: 40px; margin-left: 19px; text-align: center; }
  .t5 { margin-left: 17px; }
  .t6 { margin-left: 9px; }
  .t7 { margin-left: 9px; }
  .time { flex: 1; text-align: right; white-space: nowrap; font-size: 15px; letter-spacing: -.05px; margin-top: -2px; }
  .modal { position: absolute; left: 266px; top: 242px; width: 1239px; height: 614px; border: 7px solid rgba(0, 0, 0, .6); background: #fff; background-clip: padding-box; box-shadow: 0 0 6px rgba(0, 0, 0, .35); color: #383838; display: flex; flex-direction: column; }
  .mh { height: 57px; border-bottom: 1px solid #ddd; display: flex; align-items: center; padding: 3px 13px 0 25.500px; }
  h2 { margin: -2px 0 0; font-weight: 400; -webkit-text-stroke: .5px; font-size: 24.500px; width: 208px; color: #333; line-height: 30px; white-space: nowrap; letter-spacing: -.12px; }
  .q { margin-right: 14px; }
  .x { margin: 0 0 16px auto; }
  .ms { height: 43px; border-bottom: 1px solid #ddd; line-height: 52px; padding-left: 25px; letter-spacing: -.04px; }
  .mb { flex: 1; display: flex; }
  .ml { width: 388px; background: #f2f3f9; border-right: 1px solid #d9dae0; padding: 25px 0 0 25px; }
  .sel { width: 307px; height: 29px; margin-bottom: 13px; background: #fff; border: 1px solid #c9c9c9; border-radius: 2px; display: flex; align-items: center; justify-content: space-between; padding: 0 10px 0 5.500px; color: #666; font: 14px "Liberation Sans", sans-serif; letter-spacing: -.2px; }
  .s2 { width: 306px; padding: 0 8px 0 6px; }
  .s2 span { padding-top: 3px; }
  button { font-family: inherit; font-size: 15.200px; letter-spacing: -.2px; height: 35px; padding: 1px 0 0; border: 1px solid #c8c8c8; background: #f8f8f8; color: #444; font-weight: 400; -webkit-text-stroke: .3px; display: block; white-space: nowrap; }
  .btns { display: flex; gap: 4.500px; padding-top: 12px; }
  .add { width: 87px; background: #444; color: #fff; border-color: #333; font-weight: 700; -webkit-text-stroke: 0; }
  .reset { width: 81px; }
  .mr { flex: 1; padding: 0 0 0 31px; }
  .match { height: 80px; padding-top: 27px; display: flex; align-items: flex-start; line-height: 24px; }
  .match b { font-weight: 600; width: 230px; white-space: nowrap; letter-spacing: -.12px; }
  .match i { width: 15px; height: 15px; border-radius: 8px; border: 1px solid #767676; margin: 2px 6px 0 0; }
  .match .sel1 { background: radial-gradient(#757575 4.800px, #fff 5.400px); }
  .any { width: 107px; }
  .crit { background: #f2f3f9; height: 37px; margin-bottom: 6px; padding-left: 6px; line-height: 37px; white-space: nowrap; letter-spacing: 0; word-spacing: .3px; }
  .crit.c2 { height: 38px; line-height: 38px; padding-top: 1px; }
  .crit.c3 { height: 60px; line-height: 24px; padding-top: 7px; }
  .crit em { font-style: normal; color: #ff8a00; }
  .crit b { font-weight: 600; color: #666; letter-spacing: 0; }
  .crit s { text-decoration: none; color: #6b6b6b; letter-spacing: .2px; }
  .and { display: inline-block; width: 57px; height: 25px; line-height: 24px; border-radius: 12px; background: #424242; color: #fff; text-align: center; margin-right: 6px; vertical-align: middle; margin-top: -2px; }
  .c3 .and { margin-top: -3px; }
  .acts { display: flex; gap: 4px; margin-top: 157px; }
  .find { width: 117px; background: #3399ff; border-color: #0080e8; color: #fff; font-weight: 600; letter-spacing: -.4px; -webkit-text-stroke: 0; }
  .cancel { width: 89px; }
  .save { width: 176px; margin-left: 1px; }
</style>
